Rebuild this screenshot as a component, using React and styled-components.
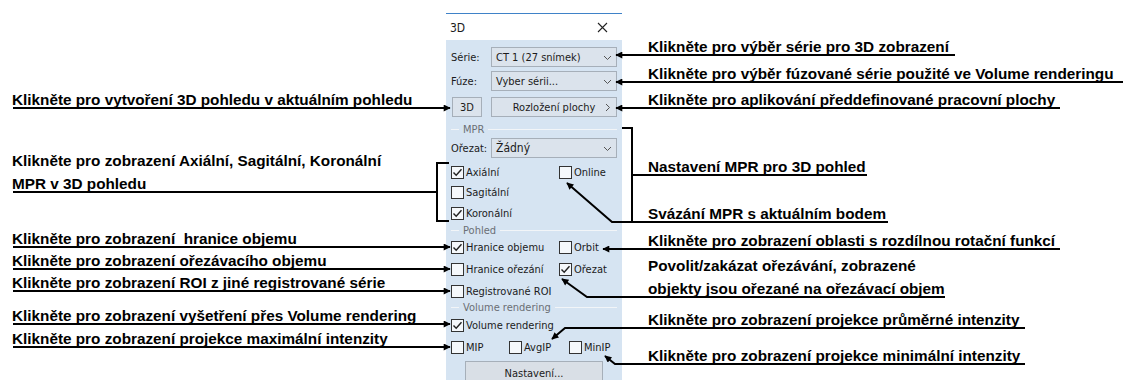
import React from "react";
import styled, { createGlobalStyle } from "styled-components";

const GlobalStyle = createGlobalStyle`
  html, body {
    margin: 0;
    padding: 0;
    background: #fff;
  }
`;

const Canvas = styled.div`
  position: relative;
  width: 1123px;
  height: 380px;
  overflow: hidden;
  display: flex;
  align-items: flex-start;
`;

const NoteColumn = styled.div`
  position: relative;
  flex: ${(p) => (p.$width ? `0 0 ${p.$width}px` : "1 1 auto")};
  height: 380px;
`;

const Note = styled.div`
  position: absolute;
  left: ${(p) => p.$left}px;
  top: ${(p) => p.$line - 20 - 23 * (p.$lines - 1)}px;
  font-family: "Liberation Sans", Arial, sans-serif;
  font-weight: bold;
  font-size: 15.3px;
  line-height: 23px;
  color: #000;
  white-space: pre;
`;

const Wires = styled.svg`
  position: absolute;
  left: 0;
  top: 0;
  width: 1123px;
  height: 380px;
  pointer-events: none;
`;

const Panel = styled.div`
  flex: 0 0 176px;
  margin-top: 13px;
  display: flex;
  flex-direction: column;
  font-family: "DejaVu Sans Condensed", "DejaVu Sans", Tahoma, sans-serif;
  font-size: 11px;
  color: #1b1b1b;
`;

const TitleBar = styled.div`
  height: 25px;
  border-top: 1px solid #3f82c8;
  background: #fff;
  display: flex;
  align-items: center;
  justify-content: space-between;
  padding: 1px 14px 0 4px;
  font-size: 12px;
`;

const Body = styled.div`
  background: #d6e4f2;
  height: 360px;
  padding: 0 5px;
  display: flex;
  flex-direction: column;
`;

const FieldRow = styled.div`
  display: flex;
  align-items: center;
  height: 20px;
  margin-top: ${(p) => p.$mt}px;
`;

const FieldLabel = styled.span`
  width: 40px;
  flex: none;
`;

const Select = styled.div`
  flex: 1;
  height: 20px;
  box-sizing: border-box;
  border: 1px solid #a6afb9;
  background: #dbe3ec;
  display: flex;
  align-items: center;
  justify-content: space-between;
  padding: 0 4px 0 4px;
  font-size: ${(p) => (p.$large ? 12 : 11)}px;
`;

const Button = styled.div`
  height: ${(p) => p.$h || 20}px;
  width: ${(p) => (p.$w ? `${p.$w}px` : "auto")};
  flex: ${(p) => (p.$w ? "none" : 1)};
  box-sizing: border-box;
  border: 1px solid #a6afb9;
  background: ${(p) => p.$bg || "#dbe3ec"};
  display: flex;
  align-items: center;
  justify-content: center;
  position: relative;
  margin-left: ${(p) => p.$ml || 0}px;
  margin-top: ${(p) => p.$mt || 0}px;
  align-self: ${(p) => p.$self || "auto"};
`;

const ButtonIcon = styled.span`
  position: absolute;
  right: 4px;
  top: 5px;
  display: flex;
`;

const GroupTitle = styled.div`
  display: flex;
  align-items: center;
  height: 12px;
  margin-top: ${(p) => p.$mt}px;
  color: #6b6f75;
  &::before {
    content: "";
    width: 8px;
    height: 1px;
    background: #f2f5f8;
    margin-right: 4px;
  }
  &::after {
    content: "";
    flex: 1;
    height: 1px;
    background: #f2f5f8;
    margin-left: 4px;
  }
`;

const CheckRow = styled.div`
  display: grid;
  grid-template-columns: ${(p) => p.$cols || "1fr"};
  height: 16px;
  align-items: center;
  margin-top: ${(p) => p.$mt}px;
`;

const CheckItem = styled.label`
  display: flex;
  align-items: center;
  gap: 2px;
  white-space: nowrap;
`;

const Box = styled.span`
  width: 13px;
  height: 13px;
  box-sizing: border-box;
  border: 1px solid #333;
  background: #f5f8fb;
  display: flex;
  align-items: center;
  justify-content: center;
  flex: none;
`;

const Chevron = ({ dir = "down" }) => (
  <svg width="9" height="9" viewBox="0 0 9 9">
    <polyline
      points={dir === "down" ? "1,3 4.5,6.5 8,3" : "3,1 6.5,4.5 3,8"}
      fill="none"
      stroke="#555"
      strokeWidth="1"
    />
  </svg>
);

const Check = ({ label, checked }) => (
  <CheckItem>
    <Box>
      {checked && (
        <svg width="11" height="11" viewBox="0 0 11 11">
          <polyline points="1.5,5.5 4.2,8.3 9.5,2.2" fill="none" stroke="#222" strokeWidth="1.4" />
        </svg>
      )}
    </Box>
    {label}
  </CheckItem>
);

const leftNotes = [
  { line: 108, text: "Klikněte pro vytvoření 3D pohledu v aktuálním pohledu" },
  { line: 192, text: "Klikněte pro zobrazení Axiální, Sagitální, Koronální\nMPR v 3D pohledu" },
  { line: 247, text: "Klikněte pro zobrazení  hranice objemu" },
  { line: 269, text: "Klikněte pro zobrazení ořezávacího objemu" },
  { line: 291, text: "Klikněte pro zobrazení ROI z jiné registrované série" },
  { line: 324, text: "Klikněte pro zobrazení vyšetření přes Volume rendering" },
  { line: 347, text: "Klikněte pro zobrazení projekce maximální intenzity" },
];

const rightNotes = [
  { line: 55, text: "Klikněte pro výběr série pro 3D zobrazení" },
  { line: 82, text: "Klikněte pro výběr fúzované série použité ve Volume renderingu" },
  { line: 108, text: "Klikněte pro aplikování předdefinované pracovní plochy" },
  { line: 175, text: "Nastavení MPR pro 3D pohled" },
  { line: 222, text: "Svázání MPR s aktuálním bodem" },
  { line: 249, text: "Klikněte pro zobrazení oblasti s rozdílnou rotační funkcí" },
  { line: 297, text: "Povolit/zakázat ořezávání, zobrazené\nobjekty jsou ořezané na ořezávací objem" },
  { line: 328, text: "Klikněte pro zobrazení projekce průměrné intenzity" },
  { line: 364, text: "Klikněte pro zobrazení projekce minimální intenzity" },
];

// each arrow starts at its tip
const arrows = [
  "450,108 13,108",
  "450,247 13,247",
  "450,269 13,269",
  "450,291 13,291",
  "450,324 13,324",
  "450,347 13,347",
  "616,55 955,55",
  "616,82 1123,82",
  "616,108 1060,108",
  "567,183 612,222 888,222",
  "603,249 1060,249",
  "562,279 587,297 945,297",
  "552,339 565,328 1025,328",
  "605,356 615,364 1025,364",
];

const plainLines = [
  "449,163 437,163 437,221 449,221",
  "437,192 13,192",
  "622,128 632,128 632,222 622,222",
  "632,175 867,175",
];

const Connectors = () => (
  <Wires viewBox="0 0 1123 380">
    <defs>
      <marker
        id="tip"
        viewBox="0 0 10 10"
        refX="9"
        refY="5"
        markerWidth="8"
        markerHeight="7"
        markerUnits="userSpaceOnUse"
        orient="auto-start-reverse"
      >
        <path d="M0,0 L10,5 L0,10 z" fill="#000" />
      </marker>
    </defs>
    {arrows.map((pts) => (
      <polyline key={pts} points={pts} fill="none" stroke="#000" strokeWidth="2" markerStart="url(#tip)" />
    ))}
    {plainLines.map((pts) => (
      <polyline key={pts} points={pts} fill="none" stroke="#000" strokeWidth="2" />
    ))}
  </Wires>
);

export default function App() {
  return (
    <>
      <GlobalStyle />
      <Canvas>
        <NoteColumn $width={446}>
          {leftNotes.map((n) => (
            <Note key={n.line} $left={12} $line={n.line} $lines={n.text.split("\n").length}>
              {n.text}
            </Note>
          ))}
        </NoteColumn>

        <Panel>
          <TitleBar>
            <span>3D</span>
            <svg width="11" height="11" viewBox="0 0 11 11">
              <path d="M1,1 L10,10 M10,1 L1,10" stroke="#222" strokeWidth="1.1" />
            </svg>
          </TitleBar>
          <Body>
            <FieldRow $mt={7}>
              <FieldLabel>Série:</FieldLabel>
              <Select>
                CT 1 (27 snímek)
                <Chevron />
              </Select>
            </FieldRow>
            <FieldRow $mt={4}>
              <FieldLabel>Fúze:</FieldLabel>
              <Select>
                Vyber sérii...
                <Chevron />
              </Select>
            </FieldRow>
            <FieldRow $mt={6}>
              <Button $w={30} $ml={1}>3D</Button>
              <Button $ml={9}>
                Rozložení plochy
                <ButtonIcon>
                  <Chevron dir="right" />
                </ButtonIcon>
              </Button>
            </FieldRow>

            <GroupTitle $mt={6}>MPR</GroupTitle>
            <FieldRow $mt={3}>
              <FieldLabel>Ořezat:</FieldLabel>
              <Select $large>
                Žádný
                <Chevron />
              </Select>
            </FieldRow>
            <CheckRow $mt={6} $cols="108px 1fr">
              <Check label="Axiální" checked />
              <Check label="Online" />
            </CheckRow>
            <CheckRow $mt={4}>
              <Check label="Sagitální" />
            </CheckRow>
            <CheckRow $mt={5}>
              <Check label="Koronální" checked />
            </CheckRow>

            <GroupTitle $mt={3}>Pohled</GroupTitle>
            <CheckRow $mt={3} $cols="108px 1fr">
              <Check label="Hranice objemu" checked />
              <Check label="Orbit" />
            </CheckRow>
            <CheckRow $mt={6} $cols="108px 1fr">
              <Check label="Hranice ořezání" />
              <Check label="Ořezat" checked />
            </CheckRow>
            <CheckRow $mt={6}>
              <Check label="Registrované ROI" />
            </CheckRow>

            <GroupTitle $mt={2}>Volume rendering</GroupTitle>
            <CheckRow $mt={4}>
              <Check label="Volume rendering" checked />
            </CheckRow>
            <CheckRow $mt={6} $cols="58px 60px 1fr">
              <Check label="MIP" />
              <Check label="AvgIP" />
              <Check label="MinIP" />
            </CheckRow>
            <Button $w={138} $h={24} $mt={6} $bg="#d9dfe6" $self="center">
              Nastavení...
            </Button>
          </Body>
        </Panel>

        <NoteColumn>
          {rightNotes.map((n) => (
            <Note key={n.line} $left={26} $line={n.line} $lines={n.text.split("\n").length}>
              {n.text}
            </Note>
          ))}
        </NoteColumn>

        <Connectors />
      </Canvas>
    </>
  );
}
